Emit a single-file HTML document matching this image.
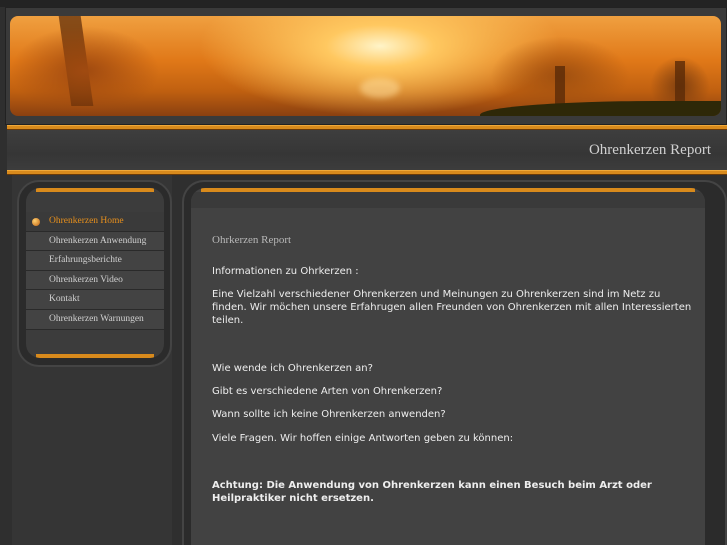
<!DOCTYPE html>
<html style="overflow:hidden;height:545px"><head><meta charset="utf-8"><style>
*{margin:0;padding:0;box-sizing:border-box}
body{width:727px;height:545px;overflow:hidden;background:#2f2f2f;position:relative;font-family:"DejaVu Sans",sans-serif}
.abs{position:absolute}
.serif{font-family:"Liberation Serif",serif}
.orange{background:#d88a1c;border-top:1px solid #f0a838;border-bottom:1px solid #6a3a08}
.menu a{display:block;height:19.6px;line-height:19px;padding-left:23px;font-size:9.5px;color:#d0d0d0;border-bottom:1px solid #2a2a2a;background:#434343;font-family:"Liberation Serif",serif;text-decoration:none;white-space:nowrap}
p{font-size:10px;color:#eee;line-height:13px;position:absolute;left:212px}
</style></head><body>
<div class="abs" style="left:0;top:0;width:727px;height:7px;background:#232323"></div>
<div class="abs" style="left:5px;top:7px;width:722px;height:118px;background:#3a3a3a;border:1px solid #222"></div>
<div class="abs" style="left:10px;top:16px;width:711px;height:100px;border-radius:8px;overflow:hidden;background:radial-gradient(ellipse 180px 70px at 370px 30px,#fff4c8 0%,#ffc860 30%,rgba(240,140,30,0) 100%),linear-gradient(180deg,#f0a040 0%,#e07818 45%,#c06010 75%,#8a4010 100%)">
<div class="abs" style="left:55px;top:0;width:22px;height:90px;background:#5a2a08;transform:skewX(8deg);opacity:.7"></div>
<div class="abs" style="left:0;top:10px;width:150px;height:90px;background:radial-gradient(#a04a10,rgba(120,50,10,0) 70%)"></div>
<div class="abs" style="left:480px;top:20px;width:140px;height:80px;background:radial-gradient(#a05010,rgba(120,50,10,0) 70%)"></div>
<div class="abs" style="left:545px;top:50px;width:10px;height:50px;background:#5a2a08;opacity:.8"></div>
<div class="abs" style="left:640px;top:40px;width:60px;height:60px;background:radial-gradient(#804010,rgba(120,50,10,0) 70%)"></div>
<div class="abs" style="left:665px;top:45px;width:10px;height:50px;background:#5a2a08;opacity:.8"></div>
<div class="abs" style="left:470px;top:85px;width:250px;height:20px;background:#2e2808;border-radius:70% 0 0 0"></div>
<div class="abs" style="left:350px;top:62px;width:40px;height:20px;background:#ffe0a0;opacity:.5;border-radius:50%;filter:blur(3px)"></div>
</div>
<div class="abs orange" style="left:7px;top:125px;width:720px;height:5px"></div>
<div class="abs" style="left:7px;top:130px;width:720px;height:40px;background:linear-gradient(#3e3e3e,#363636 60%,#3c3c3c)"></div>
<div class="abs serif" style="right:16px;top:142px;font-size:15px;color:#d0d0d0">Ohrenkerzen Report</div>
<div class="abs orange" style="left:7px;top:170px;width:720px;height:5px"></div>
<div class="abs" style="left:12px;top:175px;width:160px;height:370px;background:#353535"></div>
<div class="abs" style="left:17px;top:180px;width:155px;height:187px;border-radius:22px;background:#2b2b2b;border:2px solid #444"></div>
<div class="abs" style="left:26px;top:188px;width:138px;height:170px;border-radius:14px;background:#3c3c3c;overflow:hidden">
<div style="height:4px;margin:0 10px;background:#d88a1c"></div>
<div class="menu" style="position:absolute;top:24px;left:0;width:138px">
<a style="color:#e8901c;background:#3a3a3a">Ohrenkerzen Home</a>
<a>Ohrenkerzen Anwendung</a><a>Erfahrungsberichte</a><a>Ohrenkerzen Video</a><a>Kontakt</a><a>Ohrenkerzen Warnungen</a>
</div>
<div class="abs" style="left:10px;bottom:0;width:118px;height:4px;background:#d88a1c"></div>
</div>
<div class="abs" style="left:32px;top:218px;width:8px;height:8px;border-radius:50%;background:radial-gradient(circle at 35% 35%,#ffd070,#c06010)"></div>
<div class="abs" style="left:182px;top:180px;width:545px;height:365px;border-radius:22px 22px 0 0;background:#2b2b2b;border:2px solid #444;border-bottom:0"></div>
<div class="abs" style="left:191px;top:188px;width:514px;height:357px;border-radius:14px 14px 0 0;background:#424242;overflow:hidden">
<div style="height:4px;margin:0 10px;background:#d88a1c"></div>
<div style="height:16px;background:#3a3a3a"></div>
</div>
<div class="abs serif" style="left:212px;top:234px;font-size:11px;color:#b8b8b8">Ohrkerzen Report</div>
<p style="top:265px">Informationen zu Ohrkerzen :</p>
<p style="top:288px;width:480px">Eine Vielzahl verschiedener Ohrenkerzen und Meinungen zu Ohrenkerzen sind im Netz zu finden. Wir möchen unsere Erfahrugen allen Freunden von Ohrenkerzen mit allen Interessierten teilen.</p>
<p style="top:362px">Wie wende ich Ohrenkerzen an?</p>
<p style="top:385px">Gibt es verschiedene Arten von Ohrenkerzen?</p>
<p style="top:408px">Wann sollte ich keine Ohrenkerzen anwenden?</p>
<p style="top:432px">Viele Fragen. Wir hoffen einige Antworten geben zu können:</p>
<p style="top:479px;font-weight:bold;width:480px">Achtung: Die Anwendung von Ohrenkerzen kann einen Besuch beim Arzt oder Heilpraktiker nicht ersetzen.</p>
</body></html>
